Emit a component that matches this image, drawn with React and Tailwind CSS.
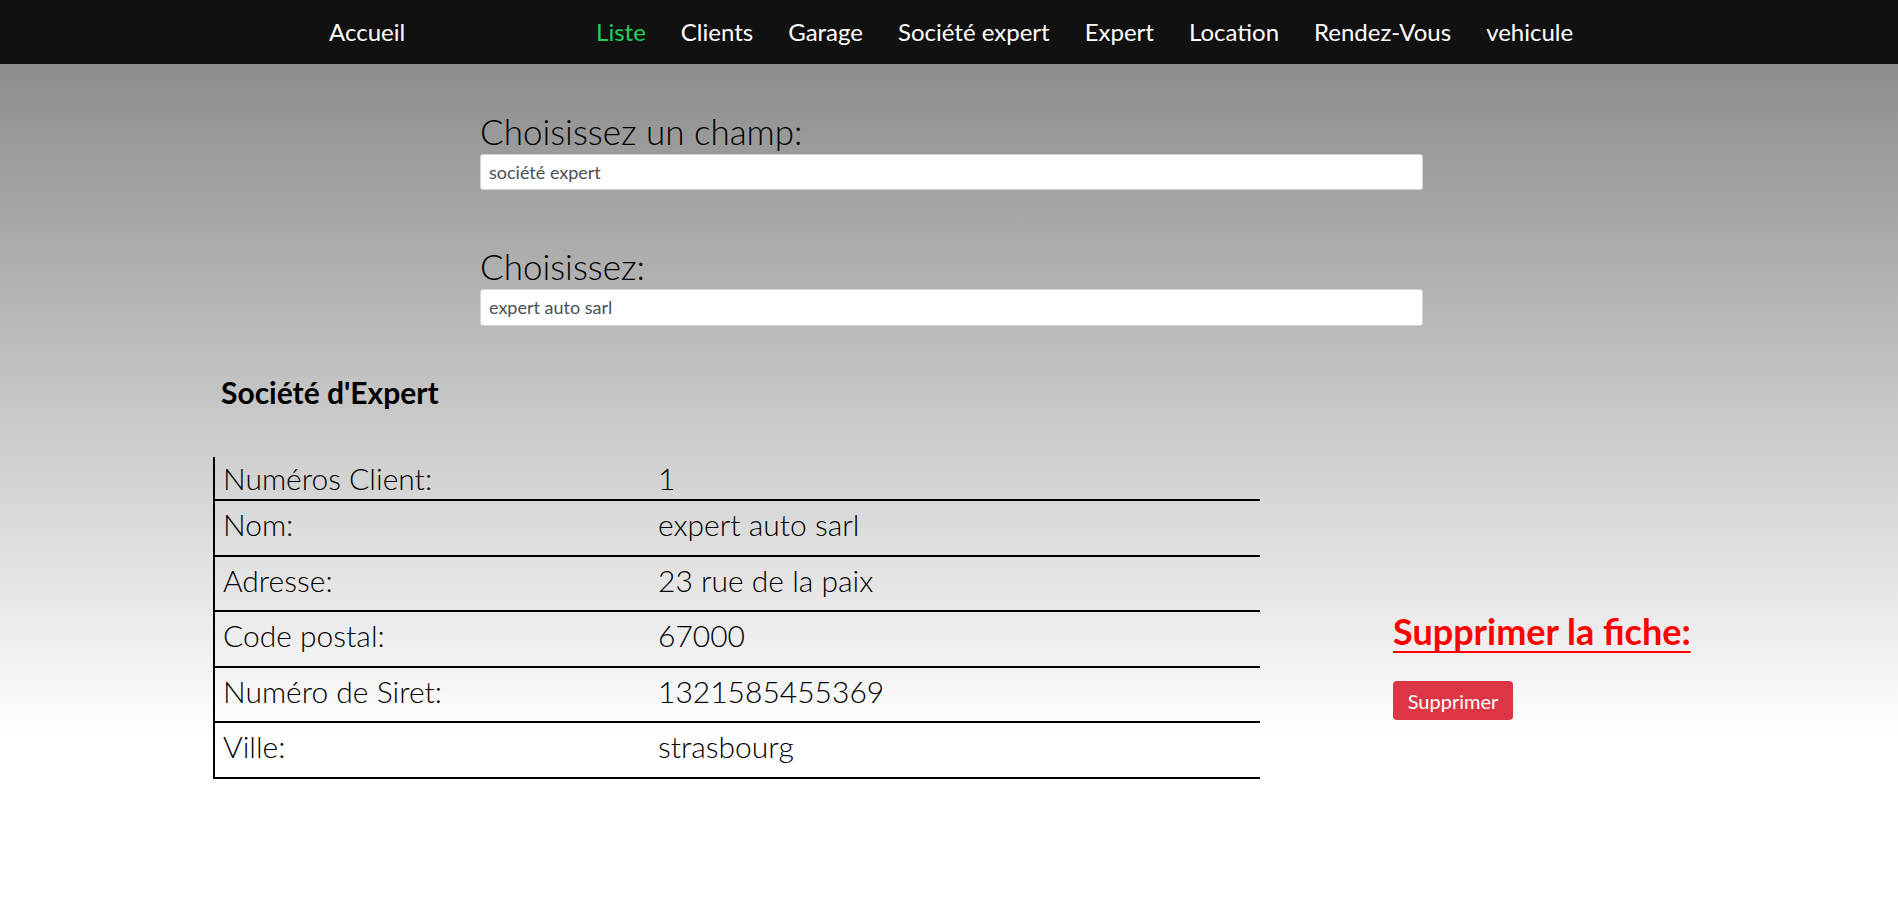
import React from "react";

const rows = [
  ["Numéros Client:", "1"],
  ["Nom:", "expert auto sarl"],
  ["Adresse:", "23 rue de la paix"],
  ["Code postal:", "67000"],
  ["Numéro de Siret:", "1321585455369"],
  ["Ville:", "strasbourg"],
];

const navItems = ["Clients", "Garage", "Société expert", "Expert", "Location", "Rendez-Vous", "vehicule"];

export default function App() {
  return (
    <div className="min-h-screen bg-white font-['Lato','Noto_Sans',sans-serif] text-black">
      <nav className="h-[64px] bg-[#111111] flex items-center text-[24px] leading-[30px] text-white">
        <a className="ml-[329px]">Accueil</a>
        <ul className="flex items-center ml-[191px] gap-[35px]">
          <li className="text-[#1ed05a]">Liste</li>
          {navItems.map((n) => (
            <li key={n}>{n}</li>
          ))}
        </ul>
      </nav>

      <main className="bg-[linear-gradient(to_bottom,#8d8d8d_0px,#ffffff_674px)] pb-[130px]">
        <div className="w-[943px] ml-[480px] pt-[46px] font-light">
          <label className="block text-[35px] leading-[42px] mb-[2px]">Choisissez un champ:</label>
          <div className="h-[36px] bg-white border border-[#d0d4d8] rounded-[3px] flex items-center pl-[8px] text-[18px] text-[#495057] font-normal">
            société expert
          </div>
          <label className="block text-[35px] leading-[42px] mt-[55px] mb-[2px]">Choisissez:</label>
          <div className="h-[37px] bg-white border border-[#d0d4d8] rounded-[3px] flex items-center pl-[8px] text-[18px] text-[#495057] font-normal">
            expert auto sarl
          </div>
        </div>

        <h2 className="ml-[221px] mt-[48px] text-[30px] leading-[36px] font-bold">Société d'Expert</h2>

        <div className="flex mt-[47px]">
          <div className="ml-[213px] w-[1047px] border-l-2 border-black font-light text-[30px] leading-[36px]">
            {rows.map(([k, v], i) => (
              <div
                key={k}
                className={`flex border-b-2 border-black pl-[8px] ${i === 0 ? "h-[44px] pt-[3px]" : "h-[55.5px] pt-[5px]"}`}
              >
                <div className="w-[435px]">{k}</div>
                <div>{v}</div>
              </div>
            ))}
          </div>
          <div className="ml-[133px] pt-[153px]">
            <div className="text-[36px] leading-[42px] font-bold text-[#ff0000] underline decoration-2 underline-offset-[6px]">
              Supprimer la fiche:
            </div>
            <button className="mt-[29px] w-[120px] h-[39px] rounded-[4px] bg-[#dc3545] text-white text-[20px]">
              Supprimer
            </button>
          </div>
        </div>
      </main>
    </div>
  );
}
